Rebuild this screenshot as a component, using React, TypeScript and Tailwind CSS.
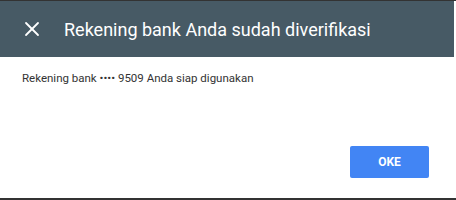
import { X } from 'lucide-react'

export default function App() {
  return (
    <div className="flex h-[200px] w-[456px] flex-col bg-[#333] font-['Roboto',sans-serif]">
      <div className="mt-px flex h-[197px] flex-col bg-white">
        <div className="mr-[2px] flex h-[56px] items-center bg-[#475a65]">
          <button className="ml-[20px] flex h-6 w-6 items-center justify-center text-white">
            <X className="h-6 w-6" strokeWidth={1.8} />
          </button>
          <h1 className="ml-[20px] text-[18px] text-white">Rekening bank Anda sudah diverifikasi</h1>
        </div>
        <p className="ml-[22px] mt-[13px] text-[11.5px] text-[#333]">
          Rekening bank •••• 9509 Anda siap digunakan
        </p>
        <div className="mt-auto mb-[20px] flex justify-end pr-[27px]">
          <button className="h-[32px] w-[79px] rounded-[2px] bg-[#4285f4] text-[12px] font-bold text-white">
            OKE
          </button>
        </div>
      </div>
    </div>
  )
}
